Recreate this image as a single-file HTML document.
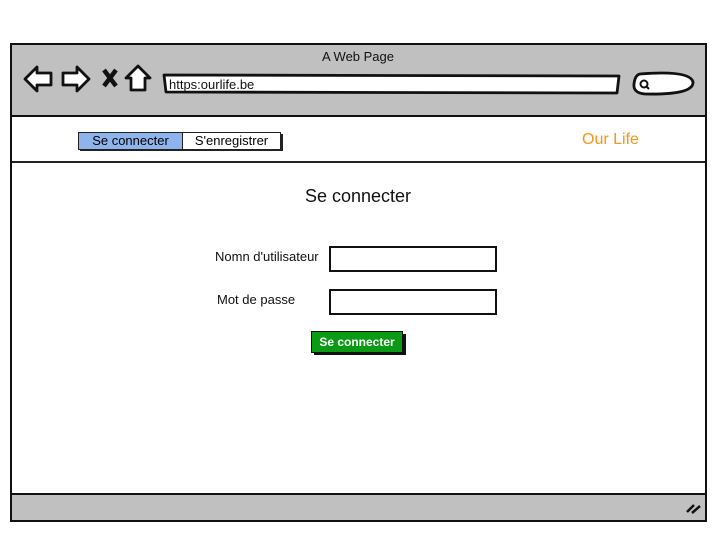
<!DOCTYPE html><html><head><style>
body{margin:0;width:724px;height:543px;background:#fff;position:relative;font-family:"Liberation Sans",sans-serif;overflow:hidden}
.a{position:absolute}
</style></head><body>
<div class="a" style="left:10px;top:43px;width:693px;height:475px;border:2px solid #111;background:#fff"></div>
<div class="a" style="left:12px;top:45px;width:693px;height:70px;background:#c0c0c0;border-bottom:2px solid #111"></div>
<div class="a" style="left:12px;top:161px;width:693px;border-top:2px solid #222"></div>
<div class="a" style="left:12px;top:493px;width:693px;height:25px;background:#c0c0c0;border-top:2px solid #111"></div>
<div class="a" style="left:0;top:49px;width:716px;text-align:center;font-size:13px;color:#111">A Web Page</div>
<svg class="a" style="left:0;top:0" width="724" height="543">
<g fill="#fff" stroke="#111" stroke-width="2.8" stroke-linejoin="round">
<path d="M25 79 L37 67 L37 73 L51 73 L51 85 L37 85 L37 91 Z"/>
<path d="M89 79 L77 67 L77 73 L63 73 L63 85 L77 85 L77 91 Z"/>
<path d="M138 66 L150 78 L145 78 L145 90 L131 90 L131 78 L126 78 Z"/>
<path d="M164 75 L619 76 L617 93 L166 92 Z"/>
<path d="M640 74 Q690 70 693 82 Q694 95 645 94 Q633 93 634 84 Q635 75 640 74 Z"/>
</g>
<path d="M104 70 L116 86 M116 70 L104 86" stroke="#111" stroke-width="4.5"/>
<circle cx="644" cy="84" r="3.5" fill="none" stroke="#111" stroke-width="2"/>
<path d="M646 86 L649 89" stroke="#111" stroke-width="2"/>
<path d="M687 512 L694 505 M692 513 L700 506" stroke="#111" stroke-width="2.5"/>
</svg>
<div class="a" style="left:169px;top:77px;font-size:13px;color:#111">https:ourlife.be</div>
<div class="a" style="left:80px;top:134px;width:203px;height:17px;background:#222"></div>
<div class="a" style="left:78px;top:132px;width:103px;height:16px;background:#8fb4ec;border:1px solid #222;font-size:13px;text-align:center;line-height:16px">Se connecter</div>
<div class="a" style="left:182px;top:132px;width:97px;height:16px;background:#fff;border:1px solid #222;font-size:13px;text-align:center;line-height:16px">S'enregistrer</div>
<div class="a" style="left:582px;top:131px;font-size:16px;color:#f7941d">Our Life</div>
<div class="a" style="left:0;top:186px;width:716px;text-align:center;font-size:18px;color:#111">Se connecter</div>
<div class="a" style="left:215px;top:249px;font-size:13px;color:#111">Nomn d'utilisateur</div>
<div class="a" style="left:217px;top:292px;font-size:13px;color:#111">Mot de passe</div>
<div class="a" style="left:329px;top:246px;width:164px;height:22px;border:2px solid #111;background:#fff"></div>
<div class="a" style="left:329px;top:289px;width:164px;height:22px;border:2px solid #111;background:#fff"></div>
<div class="a" style="left:314px;top:334px;width:92px;height:21px;background:#111"></div>
<div class="a" style="left:311px;top:331px;width:90px;height:20px;background:#0a9a14;border:1px solid #111;color:#fff;font-weight:bold;font-size:12px;text-align:center;line-height:20px">Se connecter</div>
</body></html>
